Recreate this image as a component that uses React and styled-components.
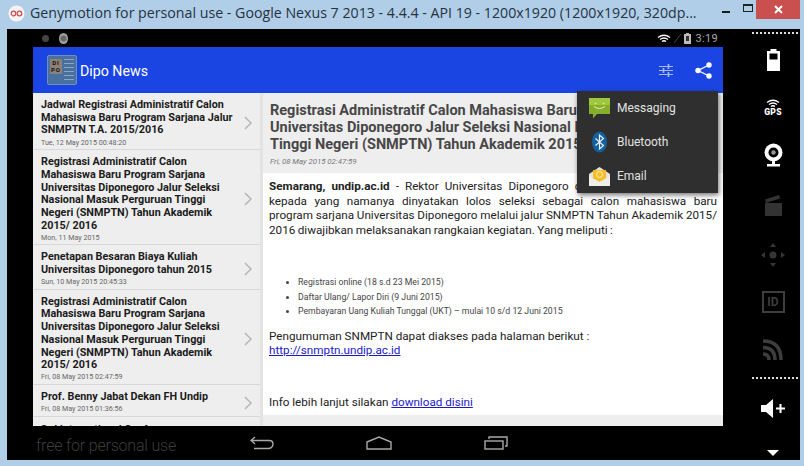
import React from 'react';
import styled, { createGlobalStyle } from 'styled-components';

const GlobalStyle = createGlobalStyle`
  html, body { margin: 0; padding: 0; background: #b1cee9; overflow: hidden; }
  * { box-sizing: border-box; }
`;

const Window = styled.div`
  width: 804px;
  height: 466px;
  background: #b1cee9;
  display: flex;
  flex-direction: column;
  overflow: hidden;
  font-family: Roboto, sans-serif;
`;

const TitleBar = styled.div`
  height: 29px;
  flex: none;
  display: flex;
  align-items: flex-start;
  padding-left: 8px;
`;

const AppLogo = styled.svg`
  width: 17px;
  height: 17px;
  margin-top: 5px;
  flex: none;
`;

const TitleText = styled.div`
  margin-left: 5px;
  margin-top: 3px;
  font-family: "Open Sans", sans-serif;
  font-size: 14.2px;
  line-height: 20px;
  color: #26323d;
  white-space: nowrap;
  width: 682px;
`;

const WinButton = styled.div`
  flex: none;
  width: ${(p) => p.$w}px;
  height: 19px;
  display: flex;
  align-items: center;
  justify-content: center;
  background: ${(p) => (p.$close ? '#c9504f' : 'transparent')};
`;

const MinGlyph = styled.div`
  width: 8px;
  height: 2px;
  background: #1a1a1a;
  margin-top: 4px;
`;

const MaxGlyph = styled.div`
  width: 10px;
  height: 8px;
  border: 1px solid #222;
  border-top-width: 2px;
  margin-top: -3px;
`;

const Screen = styled.div`
  flex: none;
  margin-left: 7px;
  width: 793px;
  height: 431px;
  background: #000;
  display: grid;
  grid-template-columns: 26px 690px 77px;
  grid-template-rows: 431px;
`;

const Main = styled.div`
  grid-column: 2;
  display: flex;
  flex-direction: column;
  min-width: 0;
`;

const StatusBar = styled.div`
  height: 18px;
  flex: none;
  display: flex;
  align-items: center;
  padding: 0 5px 0 9px;
  color: #a9a9a9;
  font-size: 11px;
`;

const StatusDot = styled.div`
  width: 7px;
  height: 7px;
  border-radius: 50%;
  background: #444;
  margin-right: 10px;
`;

const Crest = styled.div`
  width: 9px;
  height: 11px;
  border-radius: 50%;
  background: radial-gradient(circle, #666 30%, #aaa 60%, #888 100%);
`;

const StatusRight = styled.div`
  margin-left: auto;
  display: flex;
  align-items: center;
  gap: 3px;
`;

const Clock = styled.span`
  margin-left: 2px;
  letter-spacing: 0.3px;
`;

const AppFrame = styled.div`
  position: relative;
  height: 379px;
  flex: none;
  display: flex;
  flex-direction: column;
  background: #eeeeee;
  overflow: hidden;
`;

const AppBar = styled.div`
  height: 46px;
  flex: none;
  background: #1b45e3;
  display: flex;
  align-items: center;
  padding: 0 11px 0 14px;
  color: #fff;
`;

const AppTile = styled.div`
  width: 30px;
  height: 30px;
  border-radius: 2px;
  background: #49719f;
  border: 1px solid #6d93bd;
  padding: 3px 2px;
  display: flex;
  gap: 2px;
`;

const TileStamp = styled.div`
  width: 12px;
  height: 15px;
  background: #8c8078;
  color: #111;
  font-size: 6px;
  font-weight: 700;
  line-height: 7px;
  text-align: center;
  letter-spacing: 1px;
`;

const TileLines = styled.div`
  flex: 1;
  height: 22px;
  background: repeating-linear-gradient(#8aa5c4 0 1px, transparent 1px 4px);
`;

const AppName = styled.div`
  margin-left: 3px;
  margin-top: 2px;
  font-size: 14.2px;
`;

const ActionIcons = styled.div`
  margin-left: auto;
  display: flex;
  align-items: center;
  gap: 22px;
`;

const Body = styled.div`
  flex: 1;
  display: flex;
  min-height: 0;
`;

const List = styled.div`
  width: 230px;
  flex: none;
  background: #eeeeee;
  border-right: 3px solid #e3e3e3;
  overflow: hidden;
`;

const Row = styled.div`
  display: flex;
  align-items: center;
  padding: 6px 6px 1.5px 8px;
  border-bottom: 1px solid #d8d8d8;
`;

const RowText = styled.div`
  flex: 1;
  min-width: 0;
  padding-right: 6px;
`;

const RowTitle = styled.div`
  font-size: 10.8px;
  font-weight: 700;
  line-height: 12.7px;
  color: #1b1b1b;
`;

const RowDate = styled.div`
  font-size: 7.15px;
  line-height: 10px;
  margin-top: 0.5px;
  color: #666;
`;

const Chevron = styled.svg`
  width: 8px;
  height: 14px;
  flex: none;
  margin-left: 2px;
  margin-right: 2px;
`;

const Detail = styled.div`
  flex: 1;
  min-width: 0;
  display: flex;
  flex-direction: column;
`;

const DetailHead = styled.div`
  height: 80px;
  flex: none;
  padding: 9px 6px 0 7px;
  background: #eeeeee;
`;

const DetailTitle = styled.div`
  font-size: 14.5px;
  font-weight: 700;
  line-height: 17px;
  color: #474747;
  white-space: nowrap;
`;

const DetailDate = styled.div`
  margin-top: 4px;
  font-size: 7.8px;
  line-height: 10px;
  font-style: italic;
  color: #777;
`;

const Article = styled.div`
  height: 242px;
  flex: none;
  background: #fff;
  padding: 6px 6px 0 6px;
  font-size: 11.7px;
  line-height: 14.5px;
  color: #222;
`;

const Lead = styled.p`
  margin: 0;
  text-align: justify;
  word-spacing: -0.4px;
`;

const Strong = styled.strong`
  font-weight: 700;
`;

const Bullets = styled.ul`
  margin: 38px 0 0;
  padding: 0 0 0 29px;
  font-size: 8.7px;
  line-height: 14.5px;
  color: #444;
`;

const Para = styled.p`
  margin: ${(p) => p.$top}px 0 0;
`;

const Link = styled.a`
  color: #1a1acc;
  text-decoration: underline;
`;

const ClippedRow = styled.div`
  padding: 7px 0 0 8px;
`;

const ShareMenu = styled.div`
  position: absolute;
  left: 544px;
  top: 44px;
  width: 141px;
  height: 102px;
  background: #2f2f2f;
  box-shadow: 1px 2px 5px rgba(0, 0, 0, 0.55);
  display: flex;
  flex-direction: column;
`;

const MenuItem = styled.div`
  height: 34px;
  display: flex;
  align-items: center;
  padding-left: 12px;
  gap: 7px;
  color: #e2e2e2;
  font-size: 12px;
`;

const NavBar = styled.div`
  position: relative;
  flex: 1;
  display: flex;
  align-items: center;
  padding: 0 0 0 217px;
  gap: 92px;
`;

const Watermark = styled.div`
  position: absolute;
  left: 3px;
  top: 9px;
  font-family: Roboto, sans-serif;
  font-weight: 300;
  font-size: 16px;
  letter-spacing: -0.2px;
  line-height: 22px;
  color: #3d3d3d;
  white-space: nowrap;
`;

const Side = styled.div`
  grid-column: 3;
  height: 431px;
  overflow: hidden;
  display: flex;
  flex-direction: column;
  align-items: center;
  padding: 3px 2px 0 29px;
`;

const Dots = styled.div`
  width: 46px;
  height: 2px;
  flex: none;
  background: repeating-linear-gradient(90deg, #ddd 0 2px, transparent 2px 4px);
`;

const SideSlot = styled.div`
  height: ${(p) => p.$h}px;
  flex: none;
  display: flex;
  align-items: center;
  justify-content: center;
  color: #fff;
  margin-right: 4px;
  padding-top: ${(p) => p.$pad || 0}px;
`;

const GpsLabel = styled.div`
  font-size: 8.5px;
  font-weight: 900;
  line-height: 9px;
  letter-spacing: 0.3px;
`;

const GpsStack = styled.div`
  display: flex;
  flex-direction: column;
  align-items: center;
`;

const IdBox = styled.div`
  width: 23px;
  height: 22px;
  border: 2px solid #3d3d3d;
  color: #3d3d3d;
  font-size: 12px;
  font-weight: 700;
  line-height: 18px;
  text-align: center;
`;

const items = [
  { lines: 'Jadwal Registrasi Administratif Calon Mahasiswa Baru Program Sarjana Jalur SNMPTN T.A. 2015/2016', date: 'Tue, 12 May 2015 00:48:20' },
  { lines: 'Registrasi Administratif Calon Mahasiswa Baru Program Sarjana Universitas Diponegoro Jalur Seleksi Nasional Masuk Perguruan Tinggi Negeri (SNMPTN) Tahun Akademik 2015/ 2016', date: 'Mon, 11 May 2015' },
  { lines: 'Penetapan Besaran Biaya Kuliah Universitas Diponegoro tahun 2015', date: 'Sun, 10 May 2015 20:45:33' },
  { lines: 'Registrasi Administratif Calon Mahasiswa Baru Program Sarjana Universitas Diponegoro Jalur Seleksi Nasional Masuk Perguruan Tinggi Negeri (SNMPTN) Tahun Akademik 2015/ 2016', date: 'Fri, 08 May 2015 02:47:59' },
  { lines: 'Prof. Benny Jabat Dekan FH Undip', date: 'Fri, 08 May 2015 01:36:56' },
];

const ChevronIcon = () => (
  <Chevron viewBox="0 0 8 14">
    <path d="M1 1l6 6-6 6" fill="none" stroke="#b5b5b5" strokeWidth="1.5" />
  </Chevron>
);

const Slider = () => (
  <svg width="14" height="15" viewBox="0 0 14 15" fill="none" stroke="#a8b9ee" strokeWidth="1">
    <path d="M0 3.500h14M0 7.500h14M0 11.500h14" />
    <path d="M9.500 1v5M4.500 5v5M9.500 9v5" strokeWidth="1.600" />
  </svg>
);

const Share = () => (
  <svg width="17" height="17" viewBox="0 0 17 17">
    <path d="M14 3L3 8.500 14 14" fill="none" stroke="#fff" strokeWidth="1.300" />
    <circle cx="14" cy="3" r="2.700" fill="#fff" />
    <circle cx="3" cy="8.500" r="2.700" fill="#fff" />
    <circle cx="14" cy="14" r="2.700" fill="#fff" />
  </svg>
);

const Messaging = () => (
  <svg width="21" height="22" viewBox="0 0 21 22">
    <path d="M0 1h21v16H8l-4 4.500V17H0z" fill="#86ae2b" />
    <path d="M0 1h21v7H0z" fill="#a0c83f" />
    <path d="M5 9.500q5.500 4 11 0" fill="none" stroke="#e6f2b8" strokeWidth="1" />
    <circle cx="6.500" cy="6.500" r="0.800" fill="#e6f2b8" />
    <circle cx="14.500" cy="6.500" r="0.800" fill="#e6f2b8" />
  </svg>
);

const Bluetooth = () => (
  <svg width="21" height="22" viewBox="0 0 21 22">
    <ellipse cx="10.500" cy="11" rx="7.500" ry="10.500" fill="#165f9f" />
    <path d="M6.500 7.500l8 7-4 3.500V4l4 3.500-8 7" fill="none" stroke="#e8f2fb" strokeWidth="1.200" />
  </svg>
);

const Email = () => (
  <svg width="21" height="21" viewBox="0 0 21 21">
    <path d="M0 8l10.500-7L21 8v12H0z" fill="#e3e3dd" />
    <path d="M4 4h13v9l-6.500 3L4 13z" fill="#f4bf2b" />
    <circle cx="10.500" cy="8.500" r="3" fill="none" stroke="#fff2b8" strokeWidth="1" />
    <path d="M0 10l10.500 6L21 10v10H0z" fill="#eeeeea" />
  </svg>
);

const Battery = () => (
  <svg width="13" height="22" viewBox="0 0 13 22">
    <path d="M3.500 0h6v2h3.500v20H0V2h3.500z" fill="#fff" />
    <rect x="2.500" y="4.500" width="8" height="6" fill="#000" />
  </svg>
);

const Wifi = ({ color = '#fff', w = 14, h = 9 }) => (
  <svg width={w} height={h} viewBox="0 0 14 9" fill="none" stroke={color} strokeWidth="1.300">
    <path d="M1 3.500q6-4.500 12 0M3 5.500q4-3 8 0M5 7.500q2-1.500 4 0" />
  </svg>
);

const Webcam = () => (
  <svg width="19" height="24" viewBox="0 0 19 24">
    <circle cx="9.500" cy="9.500" r="9" fill="#fff" />
    <circle cx="9.500" cy="9.500" r="5" fill="#000" />
    <circle cx="9.500" cy="9.500" r="2.200" fill="#999" />
    <path d="M8 18h3v3h5v2.500H3V21h5z" fill="#fff" />
  </svg>
);

const Clapper = () => (
  <svg width="17" height="21" viewBox="0 0 17 21" fill="#333">
    <rect x="0" y="8" width="17" height="13" />
    <path d="M0 4.500L14 0l1.200 3.500L1 8z" />
  </svg>
);

const Dpad = () => (
  <svg width="24" height="24" viewBox="0 0 24 24" fill="#353535">
    <circle cx="12" cy="12" r="3.500" />
    <path d="M12 0l3 4H9zM12 24l-3-4h6zM0 12l4-3v6zM24 12l-4 3V9z" />
  </svg>
);

const Rss = () => (
  <svg width="20" height="21" viewBox="0 0 20 21" fill="none" stroke="#3d3d3d" strokeWidth="3.500">
    <path d="M0 2q18 0 18 19M0 8.500q12 0 12 12.500M0 15q6 0 6 6" />
  </svg>
);

const VolumeUp = () => (
  <svg width="25" height="19" viewBox="0 0 25 19" fill="#fff">
    <path d="M0 6h5l7-6v19l-7-6H0z" />
    <path d="M15 8.500h3.500V5h2v3.500H24v2h-3.500V14h-2v-3.500H15z" />
  </svg>
);

const DownArrow = () => (
  <svg width="12" height="6" viewBox="0 0 12 6"><path d="M0 0h12L6 6z" fill="#fff" /></svg>
);

const BackIcon = () => (
  <svg width="24" height="14" viewBox="0 0 24 14" fill="none" stroke="#a9a9a9" strokeWidth="1.400">
    <path d="M5 1L1 4.500 5 8M1 4.500h18q4 0 4 3.500t-4 4.500H4" />
  </svg>
);

const HomeIcon = () => (
  <svg width="26" height="14" viewBox="0 0 26 14" fill="none" stroke="#a9a9a9" strokeWidth="1.400">
    <path d="M1 6L13 1l12 5v7H1z" />
  </svg>
);

const RecentIcon = () => (
  <svg width="24" height="14" viewBox="0 0 24 14" fill="none" stroke="#a9a9a9" strokeWidth="1.400">
    <path d="M5 3V1h18v9h-2" />
    <rect x="1" y="5" width="18" height="8" />
  </svg>
);

export default function App() {
  return (
    <Window>
      <GlobalStyle />
      <TitleBar>
        <AppLogo viewBox="0 0 17 17">
          <circle cx="8.500" cy="8.500" r="8" fill="#f4f4f4" />
          <circle cx="5.500" cy="8.500" r="2.300" fill="none" stroke="#d84a4a" strokeWidth="1.200" />
          <circle cx="11.500" cy="8.500" r="2.300" fill="none" stroke="#d84a4a" strokeWidth="1.200" />
        </AppLogo>
        <TitleText>Genymotion for personal use - Google Nexus 7 2013 - 4.4.4 - API 19 - 1200x1920 (1200x1920, 320dp...</TitleText>
        <WinButton $w={27}><MinGlyph /></WinButton>
        <WinButton $w={17}><MaxGlyph /></WinButton>
        <WinButton $w={44} $close>
          <svg width="9" height="9" viewBox="0 0 9 9"><path d="M1 1l7 7M8 1l-7 7" stroke="#fff" strokeWidth="2" /></svg>
        </WinButton>
      </TitleBar>
      <Screen>
        <Main>
          <StatusBar>
            <StatusDot />
            <Crest />
            <StatusRight>
              <Wifi />
              <svg width="7" height="9" viewBox="0 0 7 9"><path d="M0 9L7 0" stroke="#444" strokeWidth="1" /></svg>
              <svg width="7" height="11" viewBox="0 0 7 11">
                <path d="M2 0h3v1h2v10H0V1h2z" fill="#bbb" />
                <path d="M2 3h3v5H2z" fill="#333" />
              </svg>
              <Clock>3:19</Clock>
            </StatusRight>
          </StatusBar>
          <AppFrame>
            <AppBar>
              <AppTile>
                <TileStamp>DI<br />PO</TileStamp>
                <TileLines />
              </AppTile>
              <AppName>Dipo News</AppName>
              <ActionIcons>
                <Slider />
                <Share />
              </ActionIcons>
            </AppBar>
            <Body>
              <List>
                {items.map((it, i) => (
                  <Row key={i}>
                    <RowText>
                      <RowTitle>{it.lines}</RowTitle>
                      <RowDate>{it.date}</RowDate>
                    </RowText>
                    <ChevronIcon />
                  </Row>
                ))}
                <ClippedRow>
                  <RowTitle>3rd International Conference</RowTitle>
                </ClippedRow>
              </List>
              <Detail>
                <DetailHead>
                  <DetailTitle>Registrasi Administratif Calon Mahasiswa Baru Program Sarjana</DetailTitle>
                  <DetailTitle>Universitas Diponegoro Jalur Seleksi Nasional Masuk Perguruan</DetailTitle>
                  <DetailTitle>Tinggi Negeri (SNMPTN) Tahun Akademik 2015/ 2016</DetailTitle>
                  <DetailDate>Fri, 08 May 2015 02:47:59</DetailDate>
                </DetailHead>
                <Article>
                  <Lead>
                    <Strong>Semarang, undip.ac.id</Strong> - Rektor Universitas Diponegoro dengan ini menyampaikan
                    kepada yang namanya dinyatakan lolos seleksi sebagai calon mahasiswa baru
                    program sarjana Universitas Diponegoro melalui jalur SNMPTN Tahun Akademik 2015/
                    2016 diwajibkan melaksanakan rangkaian kegiatan. Yang meliputi :
                  </Lead>
                  <Bullets>
                    <li>Registrasi online (18 s.d 23 Mei 2015)</li>
                    <li>Daftar Ulang/ Lapor Diri (9 Juni 2015)</li>
                    <li>Pembayaran Uang Kuliah Tunggal (UKT) – mulai 10 s/d 12 Juni 2015</li>
                  </Bullets>
                  <Para $top={10}>
                    Pengumuman SNMPTN dapat diakses pada halaman berikut :<br />
                    <Link>http://snmptn.undip.ac.id</Link>
                  </Para>
                  <Para $top={37}>
                    Info lebih lanjut silakan <Link>download disini</Link>
                  </Para>
                </Article>
              </Detail>
            </Body>
            <ShareMenu>
              <MenuItem><Messaging />Messaging</MenuItem>
              <MenuItem><Bluetooth />Bluetooth</MenuItem>
              <MenuItem><Email />Email</MenuItem>
            </ShareMenu>
          </AppFrame>
          <NavBar>
            <Watermark>free for personal use</Watermark>
            <BackIcon />
            <HomeIcon />
            <RecentIcon />
          </NavBar>
        </Main>
        <Side>
          <Dots />
          <SideSlot $h={52}><Battery /></SideSlot>
          <SideSlot $h={44}>
            <GpsStack>
              <Wifi />
              <GpsLabel>GPS</GpsLabel>
            </GpsStack>
          </SideSlot>
          <SideSlot $h={50}><Webcam /></SideSlot>
          <SideSlot $h={50}><Clapper /></SideSlot>
          <SideSlot $h={50}><Dpad /></SideSlot>
          <SideSlot $h={44}><IdBox>ID</IdBox></SideSlot>
          <SideSlot $h={50}><Rss /></SideSlot>
          <SideSlot $h={3} />
          <Dots />
          <SideSlot $h={58}><VolumeUp /></SideSlot>
          <SideSlot $h={23} $pad={8}><DownArrow /></SideSlot>
        </Side>
      </Screen>
    </Window>
  );
}
